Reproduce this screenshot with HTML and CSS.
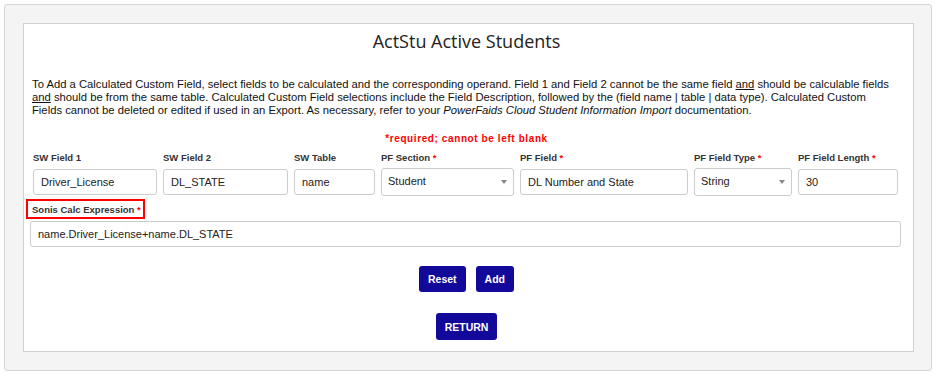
FILE: index.html
```html
<!DOCTYPE html>
<html lang="en">
<head>
    <meta charset="UTF-8">
    <meta name="viewport" content="width=device-width, initial-scale=1.0">
    <title>ActStu Active Students</title>
    <link rel="stylesheet" href="styles.css">
</head>
<body>
    <div class="frame">
        <div class="panel">
            <h1 class="title">ActStu Active Students</h1>

            <p class="intro">To Add a Calculated Custom Field, select fields to be calculated and the corresponding operand. Field 1 and Field 2 cannot be the same field <u>and</u> should be calculable fields <u>and</u> should be from the same table. Calculated Custom Field selections include the Field Description, followed by the (field name | table | data type). Calculated Custom Fields cannot be deleted or edited if used in an Export. As necessary, refer to your <i>PowerFaids Cloud Student Information Import</i> documentation.</p>

            <div class="required-note">*required; cannot be left blank</div>

            <!-- field row -->
            <div class="field-row">
                <div class="field">
                    <label>SW Field 1</label>
                    <input type="text" value="Driver_License">
                </div>
                <div class="field">
                    <label>SW Field 2</label>
                    <input type="text" value="DL_STATE">
                </div>
                <div class="field">
                    <label>SW Table</label>
                    <input type="text" value="name">
                </div>
                <div class="field">
                    <label>PF Section <span class="req">*</span></label>
                    <div class="select"><select><option>Student</option></select></div>
                </div>
                <div class="field">
                    <label>PF Field <span class="req">*</span></label>
                    <input type="text" value="DL Number and State">
                </div>
                <div class="field">
                    <label>PF Field Type <span class="req">*</span></label>
                    <div class="select"><select><option>String</option></select></div>
                </div>
                <div class="field">
                    <label>PF Field Length <span class="req">*</span></label>
                    <input type="text" value="30">
                </div>
            </div>

            <div class="calc">
                <label class="calc-label">Sonis Calc Expression <span class="req">*</span></label>
                <input type="text" class="calc-input" value="name.Driver_License+name.DL_STATE">
            </div>

            <div class="actions">
                <button class="btn">Reset</button>
                <button class="btn">Add</button>
            </div>
            <div class="actions return">
                <button class="btn">RETURN</button>
            </div>
        </div>
    </div>
</body>
</html>
```

FILE: styles.css
```css
body, html {
    margin: 0;
    padding: 0;
    font-family: "Liberation Sans", Arial, sans-serif;
    background-color: #fff;
}
.frame {
    margin: 4px;
    height: 367px;
    box-sizing: border-box;
    padding: 18px 17px 18px 18px;
    background-color: #f4f4f4;
    border: 1px solid #d6d6d6;
    border-radius: 3px;
}
.panel {
    height: 100%;
    box-sizing: border-box;
    padding: 5px 12px 0 8px;
    background-color: #fff;
    border: 1px solid #d0d0d0;
}
.title {
    margin: 0;
    font-family: "Open Sans", sans-serif;
    font-size: 18px;
    font-weight: normal;
    line-height: 24px;
    text-align: center;
    color: #222;
}
.intro {
    margin: 25px 6px 0 0;
    font-size: 11.25px;
    line-height: 13px;
    color: #111;
}
.required-note {
    margin-top: 16px;
    font-size: 10px;
    line-height: 12px;
    font-weight: bold;
    letter-spacing: 0.6px;
    text-align: center;
    color: #f00;
}
.field-row {
    display: grid;
    grid-template-columns: 124px 125px 81px 133px 168px 98px 100px;
    gap: 6px;
    margin: 6px 0 0 1px;
}
label {
    display: block;
    font-size: 9.5px;
    font-weight: bold;
    line-height: 14px;
    color: #333;
}
.field label {
    margin-bottom: 4px;
}
.req {
    color: #f00;
}
input, select {
    width: 100%;
    height: 26px;
    box-sizing: border-box;
    padding: 0 7px;
    font-family: "Liberation Sans", Arial, sans-serif;
    font-size: 11px;
    color: #222;
    background-color: #fff;
    border: 1px solid #ccc;
    border-radius: 3px;
    outline: none;
}
.select {
    position: relative;
    margin-top: -1px;
}
.select select {
    height: 28px;
    padding: 0 6px 2px;
    appearance: none;
    -webkit-appearance: none;
}
/* dropdown caret */
.select::after {
    content: '';
    position: absolute;
    right: 7px;
    top: 12px;
    border-left: 3.5px solid transparent;
    border-right: 3.5px solid transparent;
    border-top: 4px solid #888;
}
.calc {
    margin-top: 3px;
}
.calc-label {
    display: inline-block;
    margin-left: -6px;
    padding: 1px 2px 0 4px;
    line-height: 15px;
    border: 2px solid #f00;
}
.calc-input {
    display: block;
    margin: 2px 0 0 -2px;
    width: calc(100% + 2px);
}
.actions {
    display: flex;
    justify-content: center;
    gap: 10px;
    margin-top: 19px;
}
.btn {
    height: 26px;
    padding: 0 9px;
    font-family: "Liberation Sans", Arial, sans-serif;
    font-size: 10.5px;
    font-weight: bold;
    color: #fff;
    background-color: #12099b;
    border: none;
    border-radius: 3px;
}
.actions.return {
    margin-top: 21px;
}
.return .btn {
    height: 27px;
}
```
